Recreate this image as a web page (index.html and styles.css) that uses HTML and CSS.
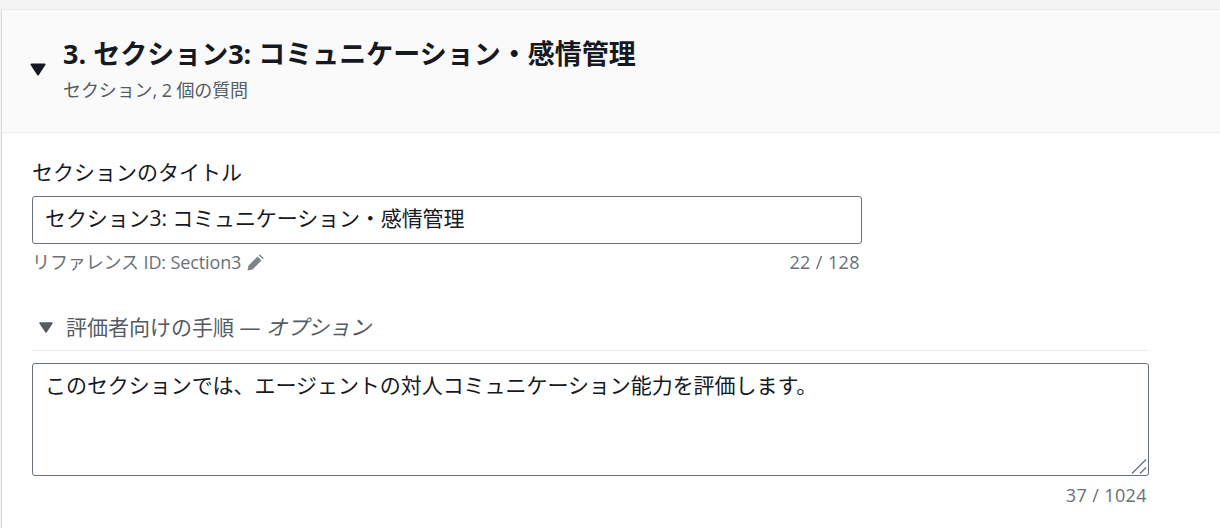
FILE: index.html
```html
<!DOCTYPE html>
<html lang="ja">
<head>
  <meta charset="UTF-8">
  <title>セクション3</title>
  <link rel="stylesheet" href="styles.css">
</head>
<body>
  <div class="card">
    <header class="card-header">
      <svg class="caret" width="16" height="14" viewBox="0 0 16 14"><path d="M1.500 2.500H14.500L8 12.500Z" fill="#16191f" stroke="#16191f" stroke-width="2" stroke-linejoin="round"/></svg>
      <div>
        <h2>3. セクション3: コミュニケーション・感情管理</h2>
        <p class="subtitle">セクション, 2 個の質問</p>
      </div>
    </header>
    <section class="card-body">
      <label class="field-label" for="title">セクションのタイトル</label>
      <div class="title-field">
        <input type="text" id="title" class="text-input" value="セクション3: コミュニケーション・感情管理">
        <div class="hint-row">
          <span class="hint">リファレンス ID: Section3
            <svg class="pencil" width="17" height="17" viewBox="0 0 17 17"><path d="M0.500 16.500l1-5L10.500 2.500l4 4-9 9zM11.800 1.200l1-1 4 4-1 1z" fill="#7d848c"/></svg>
          </span>
          <span class="hint count">22 / 128</span>
        </div>
      </div>
      <div class="expander">
        <svg width="14" height="11" viewBox="0 0 14 11"><path d="M1 1H13L7 10Z" fill="#545b64" stroke="#545b64" stroke-width="1.500" stroke-linejoin="round"/></svg>
        <span>評価者向けの手順 — <em>オプション</em></span>
      </div>
      <div class="notes-wrap">
        <textarea class="notes" id="notes">このセクションでは、エージェントの対人コミュニケーション能力を評価します。</textarea>
        <svg class="grip" width="16" height="16" viewBox="0 0 16 16"><path d="M1 15.500L15 1.500M9 15.500L15 9.500" stroke="#687078" stroke-width="1.300"/></svg>
      </div>
      <div class="hint-row hint-end">
        <span class="hint count">37 / 1024</span>
      </div>
    </section>
  </div>
</body>
</html>
```

FILE: styles.css
```css
html, body {
  height: 100%;
}

body {
  margin: 0;
  padding-top: 9px;
  box-sizing: border-box;
  background-color: #f3f3f3;
  font-family: "Open Sans", "Noto Sans CJK JP", sans-serif;
  color: #16191f;
  overflow: hidden;
}

.card {
  margin-left: 1px;
  height: 519px;
  background-color: #fff;
  border-left: 1px solid #d5dbdb;
  border-top: 1px solid #eaeded;
}

.card-header {
  display: flex;
  align-items: center;
  gap: 17px;
  height: 122px;
  padding-left: 28px;
  background-color: #fafafa;
  border-bottom: 1px solid #eaeded;
}

.caret {
  margin-top: -4px;
}

h2 {
  margin: 0;
  font-size: 27px;
  line-height: 36px;
  font-weight: 700;
  margin-top: -3px;
}

.subtitle {
  margin: 5px 0 0;
  font-size: 18px;
  line-height: 26px;
  letter-spacing: -0.1px;
  color: #545b64;
}

.card-body {
  padding: 24px 0 0 30px;
}

.field-label {
  display: block;
  font-size: 21px;
  line-height: 30px;
}

.title-field {
  width: 830px;
  margin-top: 9px;
}

.text-input {
  display: block;
  box-sizing: border-box;
  width: 100%;
  height: 48px;
  padding: 0 12px 7px;
  border: 1px solid #687078;
  border-radius: 3px;
  font: inherit;
  font-size: 21px;
  letter-spacing: -0.1px;
  color: #16191f;
  outline: none;
}

.hint-row {
  display: flex;
  justify-content: space-between;
  align-items: center;
  margin-top: 6px;
  padding-right: 2px;
}

.hint {
  display: inline-flex;
  align-items: center;
  gap: 6px;
  font-size: 18px;
  line-height: 24px;
  letter-spacing: -0.12px;
  color: #687078;
}

.count {
  letter-spacing: 0.4px;
}

.expander {
  display: flex;
  align-items: center;
  gap: 13px;
  width: 1117px;
  margin-top: 38px;
  padding: 0 0 8px 7px;
  box-sizing: border-box;
  border-bottom: 1px solid #eaeded;
  font-size: 21px;
  line-height: 30px;
  color: #545b64;
}

.notes-wrap {
  position: relative;
  width: 1117px;
  margin-top: 12px;
}

.notes {
  display: block;
  box-sizing: border-box;
  width: 100%;
  height: 113px;
  padding: 6px 12px;
  border: 1px solid #687078;
  border-radius: 3px;
  font: inherit;
  font-size: 21px;
  line-height: 30px;
  letter-spacing: -0.05px;
  color: #16191f;
  outline: none;
  resize: none;
}

.grip {
  position: absolute;
  right: 2px;
  bottom: 2px;
}

.hint-end {
  width: 1117px;
  box-sizing: border-box;
  justify-content: flex-end;
  margin-top: 7px;
}
```
